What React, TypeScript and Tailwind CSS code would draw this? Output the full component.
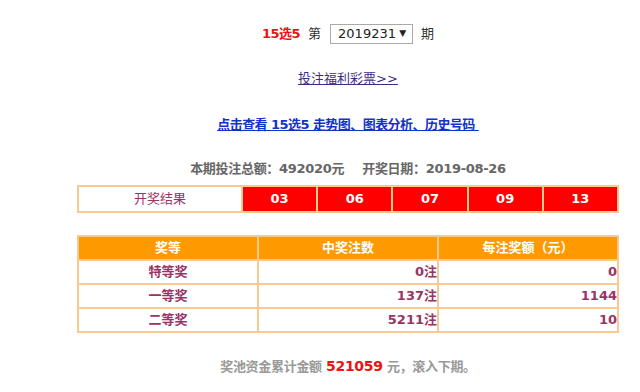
const FONT = "font-['DejaVu_Sans','Noto_Sans_CJK_SC',sans-serif]";
const BORDER = "border-[#fcc891]";

const numbers = ["03", "06", "07", "09", "13"];

const prizes = [
  { level: "特等奖", count: "0注", amount: "0" },
  { level: "一等奖", count: "137注", amount: "1144" },
  { level: "二等奖", count: "5211注", amount: "10" },
];

function ResultTable() {
  return (
    <table className={`w-full border-collapse border-2 ${BORDER} text-[13px]`}>
      <tbody>
        <tr className="h-[26px]">
          <td className={`w-[164px] border ${BORDER} bg-white text-center text-[#993366]`}>开奖结果</td>
          {numbers.map((n) => (
            <td
              key={n}
              className={`border-2 ${BORDER} bg-[#ff0000] text-center font-bold text-white`}
            >
              {n}
            </td>
          ))}
        </tr>
      </tbody>
    </table>
  );
}

function PrizeTable() {
  const td = `border-2 ${BORDER} text-[13px] font-bold text-[#993366]`;
  return (
    <table className={`w-full table-fixed border-collapse border-2 ${BORDER}`}>
      <thead>
        <tr className="h-[24px] bg-[#ff9900] text-[13px] font-bold text-white">
          <th className={`border-2 ${BORDER}`}>奖等</th>
          <th className={`border-2 ${BORDER}`}>中奖注数</th>
          <th className={`border-2 ${BORDER}`}>每注奖额（元）</th>
        </tr>
      </thead>
      <tbody>
        {prizes.map((p) => (
          <tr key={p.level} className="h-[24px] bg-white">
            <td className={`${td} text-center`}>{p.level}</td>
            <td className={`${td} text-right`}>{p.count}</td>
            <td className={`${td} text-right`}>{p.amount}</td>
          </tr>
        ))}
      </tbody>
    </table>
  );
}

export default function App() {
  return (
    <div className={`min-h-screen w-full bg-white ${FONT}`}>
      <div className="ml-[77px] flex w-[542px] flex-col items-center pt-[24px]">
        <div className="flex h-[20px] items-center text-[13px] text-[#333]">
          <span className="font-bold tracking-[-0.5px] text-[#ee1111]">15选5</span>
          <span className="ml-[8px]">第</span>
          <div className="ml-[9px] flex h-[20px] w-[83px] items-center justify-between border border-[#a9a9a9] bg-white pl-[7px] pr-[6px] text-[13px] text-[#222]">
            <span>2019231</span>
            <span className="text-[9px]">▼</span>
          </div>
          <span className="ml-[8px]">期</span>
        </div>

        <a href="#" className="mt-[25px] text-[13px] text-[#3d2a88] underline">
          投注福利彩票&gt;&gt;
        </a>

        <a href="#" className="mt-[26px] text-[13px] font-bold tracking-[-0.55px] text-[#1133cc] underline">
          点击查看 15选5 走势图、图表分析、历史号码&nbsp;
        </a>

        <div className="mt-[25px] text-[13px] font-bold tracking-[-0.3px] text-[#666]">
          本期投注总额：492020元<span className="inline-block w-[18px]" />开奖日期：2019-08-26
        </div>

        <div className="mt-[6px] w-full">
          <ResultTable />
        </div>

        <div className="mt-[22px] w-full">
          <PrizeTable />
        </div>

        <div className="mt-[23px] text-[13px] font-bold tracking-[-0.3px] text-[#999]">
          奖池资金累计金额 <span className="text-[14px] text-[#ee1111]">521059</span> 元，滚入下期。
        </div>
      </div>
    </div>
  );
}
